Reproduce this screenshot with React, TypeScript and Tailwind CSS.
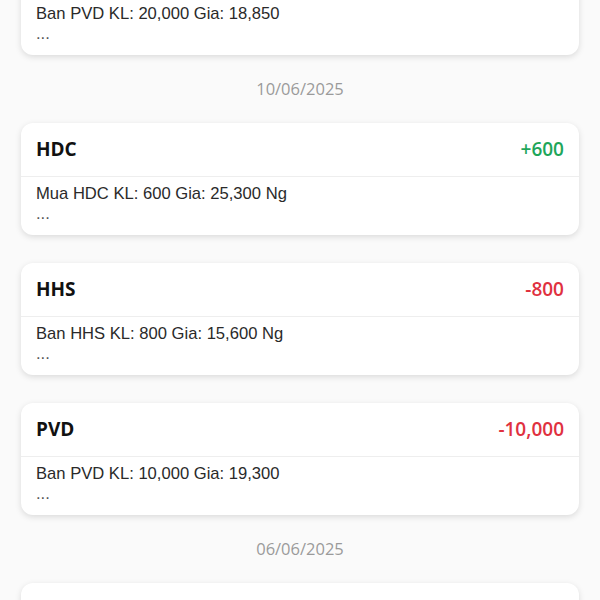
import React from "react";

type Item = { code: string; delta: string; up: boolean; text: string };

const Card = ({ item }: { item: Item }) => (
  <div className="mx-[21px] h-[112px] rounded-[12px] bg-white shadow-[0_2px_6px_rgba(0,0,0,0.13)] flex flex-col">
    <div className="h-[54px] flex items-center justify-between px-[15px] border-b border-[#eeeeee]">
      <span className="text-[19px] font-bold text-[#111111] font-['Open_Sans',sans-serif]">{item.code}</span>
      <span
        className={
          item.up
            ? "text-[19px] font-semibold text-[#1ea65a] font-['Open_Sans',sans-serif]"
            : "text-[19px] font-semibold text-[#e0313f] font-['Open_Sans',sans-serif]"
        }
      >
        {item.delta}
      </span>
    </div>
    <div className="px-[15px] pt-[7px] text-[16.6px] leading-[20px] text-[#2a2a2a] font-['Liberation_Sans',Arial,sans-serif]">
      <div>{item.text}</div>
      <div className="text-[#555555]">...</div>
    </div>
  </div>
);

const DateRow = ({ d }: { d: string }) => (
  <div className="h-[68px] flex items-center justify-center text-[16.5px] text-[#9a9a9a] font-['Open_Sans',sans-serif]">
    {d}
  </div>
);

export default function App() {
  const top: Item = { code: "PVD", delta: "-20,000", up: false, text: "Ban PVD KL: 20,000 Gia: 18,850" };
  const items: Item[] = [
    { code: "HDC", delta: "+600", up: true, text: "Mua HDC KL: 600 Gia: 25,300 Ng" },
    { code: "HHS", delta: "-800", up: false, text: "Ban HHS KL: 800 Gia: 15,600 Ng" },
    { code: "PVD", delta: "-10,000", up: false, text: "Ban PVD KL: 10,000 Gia: 19,300" },
  ];
  return (
    <div className="w-[600px] h-[600px] overflow-hidden bg-[#fafafa]">
      <div className="-mt-[57px] flex flex-col">
        <Card item={top} />
        <DateRow d="10/06/2025" />
        <div className="flex flex-col gap-[28px]">
          {items.map((it, i) => (
            <Card key={i} item={it} />
          ))}
        </div>
        <DateRow d="06/06/2025" />
        <Card item={{ code: "VND", delta: "+1,000", up: true, text: "Mua VND KL: 1,000 Gia: 16,000" }} />
      </div>
    </div>
  );
}
